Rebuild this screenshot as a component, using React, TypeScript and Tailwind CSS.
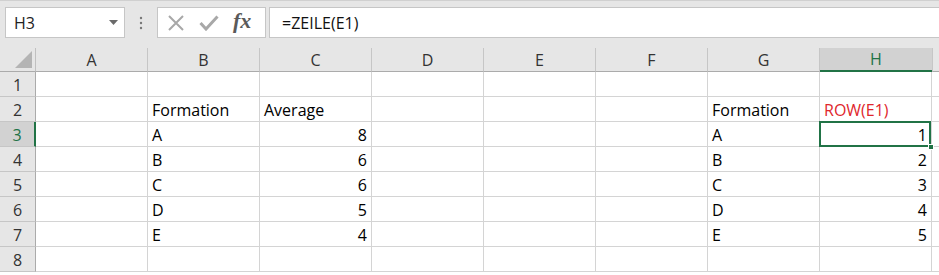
import React from "react";

const cols = ["A", "B", "C", "D", "E", "F", "G", "H"];

type Cell = { text?: string; align?: "left" | "right"; red?: boolean };

const data: Record<number, Record<string, Cell>> = {
  2: {
    B: { text: "Formation" },
    C: { text: "Average" },
    G: { text: "Formation" },
    H: { text: "ROW(E1)", red: true },
  },
  3: { B: { text: "A" }, C: { text: "8", align: "right" }, G: { text: "A" }, H: { text: "1", align: "right" } },
  4: { B: { text: "B" }, C: { text: "6", align: "right" }, G: { text: "B" }, H: { text: "2", align: "right" } },
  5: { B: { text: "C" }, C: { text: "6", align: "right" }, G: { text: "C" }, H: { text: "3", align: "right" } },
  6: { B: { text: "D" }, C: { text: "5", align: "right" }, G: { text: "D" }, H: { text: "4", align: "right" } },
  7: { B: { text: "E" }, C: { text: "4", align: "right" }, G: { text: "E" }, H: { text: "5", align: "right" } },
};

const gridCols = "grid grid-cols-[36px_repeat(8,112px)_1fr]";

function FormulaBar() {
  return (
    <div className="h-[48px] bg-[#e6e6e6] border-t border-[#d0d0d0] flex items-start pt-[6px]">
      <div className="ml-[5px] w-[120px] h-[31px] bg-white border border-[#c6c6c6] flex items-center justify-between pl-[8px] pr-[6px]">
        <span className="text-[16px] text-[#222]">H3</span>
        <svg width="9" height="5" viewBox="0 0 9 5">
          <path d="M0 0h9L4.5 5z" fill="#6a6a6a" />
        </svg>
      </div>
      <div className="w-[32px] h-[31px] flex items-center justify-center">
        <svg width="4" height="14" viewBox="0 0 4 14">
          <circle cx="2" cy="2" r="1.2" fill="#777" />
          <circle cx="2" cy="7" r="1.2" fill="#777" />
          <circle cx="2" cy="12" r="1.2" fill="#777" />
        </svg>
      </div>
      <div className="w-[109px] h-[31px] bg-white border border-[#c6c6c6] flex items-center">
        <svg className="ml-[9px]" width="18" height="18" viewBox="0 0 18 18">
          <path d="M2 2l14 14M16 2L2 16" stroke="#a8a8a8" strokeWidth="2" />
        </svg>
        <svg className="ml-[14px]" width="20" height="16" viewBox="0 0 20 16">
          <path d="M1.5 8l5.5 6L18.5 1.5" stroke="#a8a8a8" strokeWidth="3" fill="none" />
        </svg>
        <span className="ml-[14px] text-[22px] italic font-semibold text-[#5a5a5a] font-['Liberation_Serif',serif] leading-none -mt-[4px]">
          fx
        </span>
      </div>
      <div className="ml-[3px] flex-1 h-[31px] bg-white border border-[#c6c6c6] border-r-0 flex items-center pl-[12px]">
        <span className="text-[16px] text-[#111]">=ZEILE(E1)</span>
      </div>
    </div>
  );
}

function HeaderRow() {
  return (
    <div className={`${gridCols} h-[24px] bg-[#e6e6e6]`}>
      <div className="relative border-r border-[#c0c0c0] border-b border-b-[#ababab]">
        <svg className="absolute right-[3px] bottom-[3px]" width="17" height="17" viewBox="0 0 17 17">
          <path d="M17 0V17H0z" fill="#b4b4b4" />
        </svg>
      </div>
      {cols.map((c) =>
        c === "H" ? (
          <div key={c} className="bg-[#d2d2d2] border-b-2 border-[#217346] flex items-center justify-center text-[16px] text-[#217346]">
            {c}
          </div>
        ) : (
          <div key={c} className="border-r border-[#c6c6c6] border-b border-b-[#ababab] flex items-center justify-center text-[16px] text-[#333]">
            {c}
          </div>
        )
      )}
      <div className="border-b border-[#ababab] border-l border-l-[#c6c6c6]" />
    </div>
  );
}

function Row({ n }: { n: number }) {
  const selected = n === 3;
  const row = data[n] || {};
  return (
    <div className={`${gridCols} h-[25px]`}>
      <div
        className={`flex items-end pb-[3px] justify-center text-[16px] border-b border-[#c6c6c6] ${
          selected
            ? "bg-[#d2d2d2] text-[#217346] border-r-2 border-r-[#217346]"
            : "bg-[#e6e6e6] text-[#333] border-r border-r-[#ababab]"
        }`}
      >
        {n}
      </div>
      {cols.map((c) => {
        const cell = row[c] || {};
        const isActive = selected && c === "H";
        return (
          <div
            key={c}
            className={`relative bg-white border-r border-b border-[#d4d4d4] flex items-end pb-[3px] px-[4px] text-[16px] ${
              cell.align === "right" ? "justify-end" : "justify-start"
            } ${cell.red ? "text-[#e0262c]" : "text-black"} ${isActive ? "z-10" : ""}`}
          >
            {isActive && (
              <>
                <div className="absolute -left-[1px] -top-[1px] right-0 bottom-[-1px] border-2 border-[#217346]" />
                <div className="absolute right-[-3px] bottom-[-4px] w-[6px] h-[6px] bg-[#217346] border border-white" />
              </>
            )}
            <span className="relative">{cell.text}</span>
          </div>
        );
      })}
      <div className="bg-white border-b border-[#d4d4d4]" />
    </div>
  );
}

export default function App() {
  return (
    <div className="w-[939px] h-[275px] overflow-hidden bg-white font-['Open_Sans',sans-serif] leading-none">
      <FormulaBar />
      <HeaderRow />
      {[1, 2, 3, 4, 5, 6, 7, 8].map((n) => (
        <Row key={n} n={n} />
      ))}
    </div>
  );
}
